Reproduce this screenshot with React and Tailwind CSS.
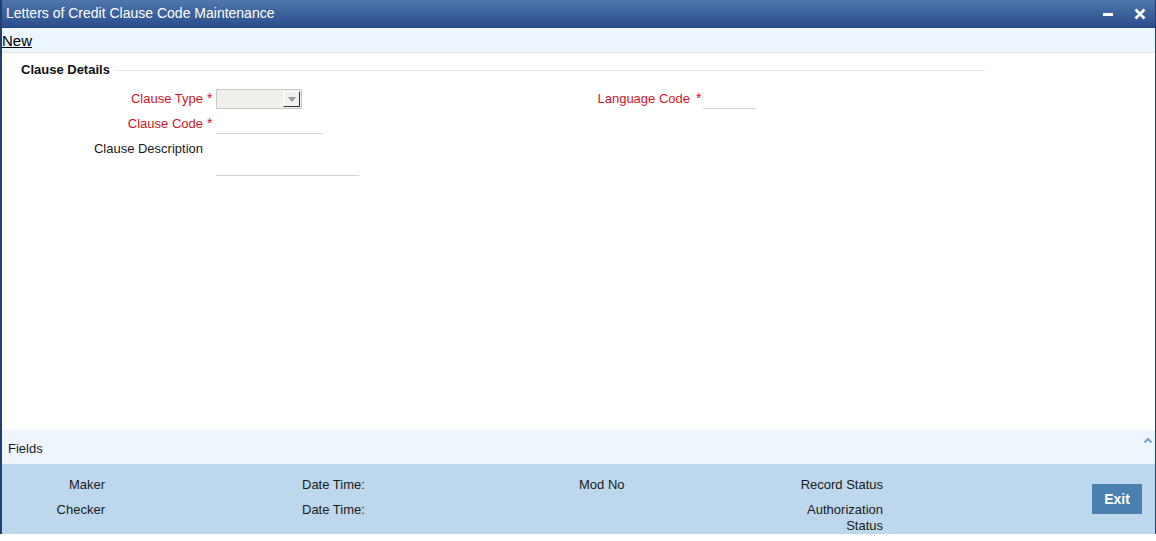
import React from "react";

function Label({ children, required, width }) {
  return (
    <div className="flex items-center">
      <span
        className={`${width} text-right ${required ? "text-[#cf1427]" : "text-[#1a1a1a]"}`}
      >
        {children}
      </span>
      <span className="w-[13px] pl-[4px] text-[14px] text-[#cf1427] leading-none self-start pt-[2px]">
        {required ? "*" : ""}
      </span>
    </div>
  );
}

function SelectBox() {
  return (
    <div className="w-[86px] h-[20px] border border-[#c9c9c9] bg-[#f0efeb] flex justify-end items-stretch p-[1px]">
      <div className="w-[17px] bg-[#f2f1ed] border-t border-l border-t-white border-l-white border-r border-b border-r-[#333] border-b-[#333] flex items-center justify-center">
        <svg width="8" height="5" viewBox="0 0 8 5">
          <path d="M0 0 H8 L4 5 Z" fill="#9a9a9a" />
        </svg>
      </div>
    </div>
  );
}

function App() {
  return (
    <div
      className="w-[1156px] h-[541px] bg-white text-[13px]"
      style={{ fontFamily: '"Liberation Sans", Arial, sans-serif' }}
    >
      <div className="h-[534px] flex flex-col border-l-2 border-r border-[#213f72]">
        {/* title bar */}
        <div className="h-[28px] flex items-center justify-between bg-gradient-to-b from-[#5076ab] to-[#2a4e8d] border-b border-[#24457e] pl-[4px] pr-[9px]">
          <span className="text-white text-[14px]">
            Letters of Credit Clause Code Maintenance
          </span>
          <div className="flex items-center gap-[21px]">
            <div className="w-[10px] h-[3px] bg-white mt-[2px]" />
            <svg width="12" height="12" viewBox="0 0 12 12">
              <path d="M1.5 1.5 L10.5 10.5 M10.5 1.5 L1.5 10.5" stroke="white" strokeWidth="2.6" />
            </svg>
          </div>
        </div>

        {/* toolbar */}
        <div className="h-[25px] bg-[#edf5fe] border-b border-[#e3e6ea] flex items-center">
          <span className="text-[15px] underline text-black leading-none">New</span>
        </div>

        {/* content */}
        <div className="flex-1">
          <div className="mt-[9px] h-[16px] flex items-center">
            <span className="pl-[19px] font-bold text-[#111] pr-[4px]">Clause Details</span>
            <div className="flex-1 border-t border-[#e8e8e8] mr-[170px]" />
          </div>

          <div className="flex mt-[11px]">
            <div className="w-[559px]">
              <div className="flex h-[20px]">
                <Label required width="w-[201px]">Clause Type</Label>
                <SelectBox />
              </div>
              <div className="flex h-[21px] mt-[4px] pt-[1px]">
                <Label required width="w-[201px]">Clause Code</Label>
                <div className="w-[107px] border-b border-[#d2d2d2] -mt-[1px]" />
              </div>
              <div className="flex h-[36px] mt-[6px]">
                <div className="flex items-start">
                  <span className="w-[201px] text-right text-[#1a1a1a] leading-[18px]">
                    Clause Description
                  </span>
                  <span className="w-[13px]" />
                </div>
                <div className="w-[143px] border-b border-[#d2d2d2]" />
              </div>
            </div>
            <div className="flex h-[20px]">
              <div className="flex items-center">
                <span className="w-[129px] text-right text-[#cf1427]">Language Code</span>
                <span className="w-[13px] pl-[6px] text-[14px] text-[#cf1427] self-start pt-[2px] leading-none">*</span>
              </div>
              <div className="w-[53px] border-b border-[#d2d2d2]" />
            </div>
          </div>
        </div>

        {/* fields bar */}
        <div className="h-[34px] bg-[#eef5fd] flex items-center justify-between pl-[6px] pr-[2px]">
          <span className="text-[#1a1a1a] mt-[3px]">Fields</span>
          <svg width="10" height="7" viewBox="0 0 10 7" className="mb-[14px]">
            <path d="M1.5 5.5 L5 2 L8.5 5.5" stroke="#7aa2d2" strokeWidth="2" fill="none" />
          </svg>
        </div>

        {/* audit panel */}
        <div className="h-[70px] bg-[#bdd8ec] flex text-[#1a1a1a] pt-[13px]">
          <div className="w-[103px] flex flex-col items-end gap-[9px] leading-[16px]">
            <span>Maker</span>
            <span>Checker</span>
          </div>
          <div className="ml-[197px] w-[200px] flex flex-col gap-[9px] leading-[16px]">
            <span>Date Time:</span>
            <span>Date Time:</span>
          </div>
          <div className="ml-[77px] w-[120px] leading-[16px]">
            <span>Mod No</span>
          </div>
          <div className="ml-[6px] w-[178px] flex flex-col items-end text-right leading-[16px]">
            <span>Record Status</span>
            <span className="mt-[9px]">Authorization</span>
            <span>Status</span>
          </div>
          <div className="ml-[209px] pt-[7px]">
            <button className="w-[50px] h-[30px] bg-[#4a80b0] text-white text-[14px] font-bold">
              Exit
            </button>
          </div>
        </div>
      </div>
    </div>
  );
}

export default App;
